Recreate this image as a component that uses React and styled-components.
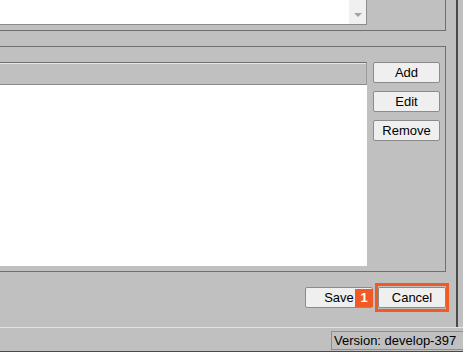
import styled, { createGlobalStyle } from "styled-components";

const Global = createGlobalStyle`
  html, body {
    margin: 0;
    padding: 0;
    background: #c0c0c0;
  }
  body {
    font-family: "Liberation Sans", Arial, sans-serif;
    font-size: 13px;
  }
`;

const Window = styled.div`
  width: 463px;
  height: 352px;
  overflow: hidden;
  background: #c0c0c0;
  display: flex;
  flex-direction: column;
`;

const Main = styled.div`
  display: flex;
  height: 327px;
`;

const Content = styled.div`
  width: 456px;
  display: flex;
  flex-direction: column;
`;

const Edge = styled.div`
  width: 2px;
  background: #4a4a4a;
`;

const TopGroup = styled.div`
  width: 445px;
  height: 30px;
  border-right: 1px solid #6f6f6f;
  border-bottom: 1px solid #6f6f6f;
`;

const TextBox = styled.div`
  width: 366px;
  height: 24px;
  background: #fff;
  border-right: 1px solid #8c8c8c;
  border-bottom: 1px solid #8c8c8c;
  display: flex;
  justify-content: flex-end;
`;

const ScrollBar = styled.div`
  width: 17px;
  background: #f0f0f0;
  display: flex;
  align-items: flex-end;
  justify-content: center;
  padding-bottom: 7px;
  box-sizing: border-box;
`;

const Arrow = styled.div`
  width: 0;
  height: 0;
  border-left: 4px solid transparent;
  border-right: 4px solid transparent;
  border-top: 4px solid #a3a3a3;
`;

const Group = styled.div`
  margin-top: 15px;
  width: 445px;
  height: 209px;
  border-top: 1px solid #6f6f6f;
  border-right: 1px solid #6f6f6f;
  border-bottom: 1px solid #6f6f6f;
  padding-top: 15px;
  display: flex;
  gap: 6px;
`;

const Table = styled.div`
  width: 367px;
  display: flex;
  flex-direction: column;
`;

const Header = styled.div`
  height: 21px;
  border-top: 1px solid #6f6f6f;
  border-right: 1px solid #9a9a9a;
  border-bottom: 1px solid #8a8a8a;
  box-shadow: inset 0 1px 0 #e6e6e6;
  background: #c0c0c0;
`;

const List = styled.div`
  height: 181px;
  background: #fff;
`;

const ButtonColumn = styled.div`
  display: flex;
  flex-direction: column;
  gap: 8px;
`;

const Button = styled.button`
  width: ${(p) => p.$w || 67}px;
  height: 21px;
  padding: 0;
  background: #efefef;
  border: 1px solid #8b8b8b;
  border-radius: 2px;
  font-family: "Liberation Sans", Arial, sans-serif;
  font-size: 13px;
  color: #000;
  line-height: 19px;
`;

const Actions = styled.div`
  width: 446px;
  margin-top: 15px;
  display: flex;
  justify-content: flex-end;
  gap: 5px;
`;

const Spot = styled.div`
  position: relative;
  display: flex;
`;

const Highlight = styled.div`
  position: absolute;
  top: -4px;
  left: -3px;
  right: -3px;
  bottom: -4px;
  border: 3px solid #f15a24;
  pointer-events: none;
`;

const Badge = styled.div`
  position: absolute;
  top: 2px;
  left: -23px;
  width: 18px;
  height: 18px;
  background: #f15a24;
  color: #fff;
  font-weight: bold;
  font-size: 13px;
  line-height: 18px;
  text-align: center;
`;

const StatusBar = styled.div`
  height: 23px;
  border-top: 1px solid #e2e2e2;
  border-bottom: 1px solid #4a4a4a;
  display: flex;
  justify-content: flex-end;
  align-items: flex-end;
`;

const Version = styled.div`
  width: 129px;
  height: 17px;
  margin-bottom: 1px;
  border: 1px solid #8e8e8e;
  border-right: none;
  padding-left: 2px;
  font-size: 13px;
  line-height: 17px;
  color: #000;
  white-space: nowrap;
`;

export default function App() {
  return (
    <Window>
      <Global />
      <Main>
        <Content>
          <TopGroup>
            <TextBox>
              <ScrollBar>
                <Arrow />
              </ScrollBar>
            </TextBox>
          </TopGroup>
          <Group>
            <Table>
              <Header />
              <List />
            </Table>
            <ButtonColumn>
              <Button>Add</Button>
              <Button>Edit</Button>
              <Button>Remove</Button>
            </ButtonColumn>
          </Group>
          <Actions>
            <Button $w={68}>Save</Button>
            <Spot>
              <Button $w={68}>Cancel</Button>
              <Highlight />
              <Badge>1</Badge>
            </Spot>
          </Actions>
        </Content>
        <Edge />
      </Main>
      <StatusBar>
        <Version>Version: develop-397</Version>
      </StatusBar>
    </Window>
  );
}
